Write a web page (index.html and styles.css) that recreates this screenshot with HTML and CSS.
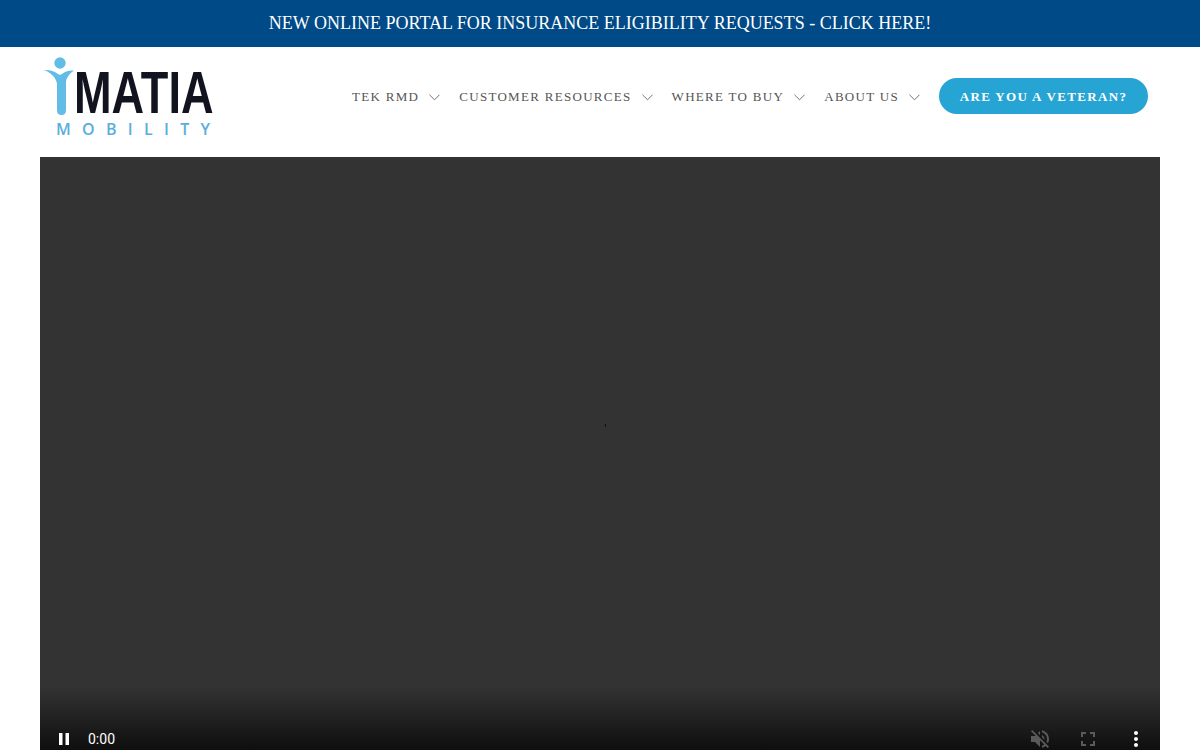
FILE: index.html
```html
<!DOCTYPE html>
<html lang="en">
<head>
<meta charset="utf-8">
<title>Imatia Mobility</title>
<link rel="stylesheet" href="styles.css">
</head>
<body>
<a class="announce" href="#">NEW ONLINE PORTAL FOR INSURANCE ELIGIBILITY REQUESTS - CLICK HERE!</a>
<header class="header">
  <a class="logo" href="#" aria-label="Imatia Mobility">
    <svg class="logo-svg" viewBox="0 0 40 70" width="40" height="70">
      <circle class="logo-figure" cx="20" cy="11" r="5.7"/>
      <path class="logo-figure" d="M4 18C9 17.500 14 19 18 22C19.500 23.100 20.500 23.100 22 22C25 19.500 29 18 34 18.500C29.500 21.500 26.500 25.500 26 30L26 58.500C26 61.500 24 63 21.500 63C19 63 17 61.500 17 58.500L17 32C16.500 26 11 20.500 4 18Z"/>
    </svg>
    <span class="logo-name">MATIA</span>
    <span class="logo-sub">MOBILITY</span>
  </a>
  <nav class="nav">
    <a class="nav-item" href="#">TEK RMD<svg class="chev" viewBox="0 0 12 7" width="11" height="7"><path d="M.5.5 6 6 11.500.5"/></svg></a>
    <a class="nav-item" href="#">CUSTOMER RESOURCES<svg class="chev" viewBox="0 0 12 7" width="11" height="7"><path d="M.5.5 6 6 11.500.5"/></svg></a>
    <a class="nav-item" href="#">WHERE TO BUY<svg class="chev" viewBox="0 0 12 7" width="11" height="7"><path d="M.5.5 6 6 11.500.5"/></svg></a>
    <a class="nav-item" href="#">ABOUT US<svg class="chev" viewBox="0 0 12 7" width="11" height="7"><path d="M.5.5 6 6 11.500.5"/></svg></a>
    <a class="cta" href="#">ARE YOU A VETERAN?</a>
  </nav>
</header>
<section class="video">
  <span class="speck"></span>
  <div class="controls">
    <svg class="ctl ctl-pause" viewBox="0 0 24 24" width="24" height="24"><path d="M7 18h3.500V6H7v12zm6.500-12v12H17V6h-3.500z"/></svg>
    <span class="time">0:00</span>
    <span class="spacer"></span>
    <svg class="ctl ctl-off" viewBox="0 0 24 24" width="24" height="24"><path d="M16.500 12c0-1.770-1.020-3.290-2.500-4.030v2.210l2.450 2.450c.03-.2.05-.41.05-.63zm2.500 0c0 .94-.2 1.820-.54 2.640l1.510 1.510C20.630 14.910 21 13.500 21 12c0-4.280-2.990-7.860-7-8.770v2.060c2.890.86 5 3.540 5 6.710zM4.270 3L3 4.270 7.730 9H3v6h4l5 5v-6.730l4.250 4.250c-.67.52-1.420.93-2.250 1.180v2.060c1.380-.31 2.630-.95 3.690-1.810L19.730 21 21 19.730l-9-9L4.270 3zM12 4L9.910 6.090 12 8.180V4z"/></svg>
    <svg class="ctl ctl-off" viewBox="0 0 24 24" width="24" height="24"><path d="M7 14H5v5h5v-2H7v-3zm-2-4h2V7h3V5H5v5zm12 7h-3v2h5v-5h-2v3zM14 5v2h3v3h2V5h-5z"/></svg>
    <svg class="ctl" viewBox="0 0 24 24" width="24" height="24"><path d="M12 8c1.100 0 2-.9 2-2s-.9-2-2-2-2 .9-2 2 .9 2 2 2zm0 2c-1.100 0-2 .9-2 2s.9 2 2 2 2-.9 2-2-.9-2-2-2zm0 6c-1.100 0-2 .9-2 2s.9 2 2 2 2-.9 2-2-.9-2-2-2z"/></svg>
  </div>
</section>
</body>
</html>
```
FILE: styles.css
```css
* { box-sizing: border-box; }
html, body { margin: 0; height: 750px; overflow: hidden; background: #fff; }
body { display: flex; flex-direction: column; font-family: "Liberation Serif", serif; }
a { text-decoration: none; }

.announce {
  height: 47px;
  flex: none;
  display: flex;
  align-items: center;
  justify-content: center;
  background: #004a87;
  color: #fff;
  font-size: 18px;
}

.header {
  height: 110px;
  flex: none;
  display: flex;
  align-items: flex-start;
  justify-content: space-between;
  padding: 5px 52px 0 40px;
}
.logo {
  position: relative;
  display: block;
  width: 190px;
  height: 96px;
  padding-top: 20px;
}
.logo-svg { position: absolute; left: 0; top: 0; display: block; }
.logo-figure { fill: #62bde6; }
.logo-name {
  display: block;
  margin-left: 34px;
  font-family: "Liberation Sans", sans-serif;
  font-weight: 700;
  font-size: 59px;
  line-height: 43px;
  color: #11131f;
  white-space: nowrap;
  transform: scaleX(.765);
  transform-origin: 0 50%;
}
.logo-sub {
  display: block;
  margin: 7px 0 0 16px;
  font-family: "Open Sans", sans-serif;
  font-weight: 600;
  font-size: 16px;
  line-height: 14px;
  letter-spacing: 11.300px;
  color: #5aaedc;
  white-space: nowrap;
}

.nav { display: flex; align-items: center; margin-top: 26px; }
.nav-item {
  display: flex;
  align-items: center;
  gap: 10px;
  margin-right: 19px;
  padding-top: 2px;
  color: #555;
  font-size: 13px;
  letter-spacing: 1.3px;
  white-space: nowrap;
}
.chev { flex: none; }
.chev path { fill: none; stroke: #666; stroke-width: 1; }
.cta {
  width: 209px;
  height: 36px;
  padding-top: 1px;
  display: flex;
  align-items: center;
  justify-content: center;
  border-radius: 18px;
  background: #26a4d3;
  color: #fff;
  font-size: 13px;
  font-weight: 700;
  letter-spacing: 1.35px;
  white-space: nowrap;
}

.video {
  position: relative;
  flex: none;
  height: 604px;
  margin: 0 40px;
  display: flex;
  align-items: flex-end;
  background: linear-gradient(to bottom, #333 0, #333 530px, #080808 604px);
}
.speck {
  position: absolute;
  left: 565px;
  top: 267px;
  width: 1px;
  height: 3px;
  background: #111;
}
.controls {
  width: 100%;
  height: 46px;
  padding: 12px 12px 0;
  display: flex;
  align-items: flex-start;
  gap: 24px;
  color: #fff;
}
.ctl { flex: none; display: block; fill: #fff; }
.ctl-off { fill: #5a5a5a; }
.time {
  margin: 3px 0 0 -12px;
  font-family: Roboto, sans-serif;
  font-size: 14px;
  line-height: 18px;
}
.spacer { flex: 1; }
```
